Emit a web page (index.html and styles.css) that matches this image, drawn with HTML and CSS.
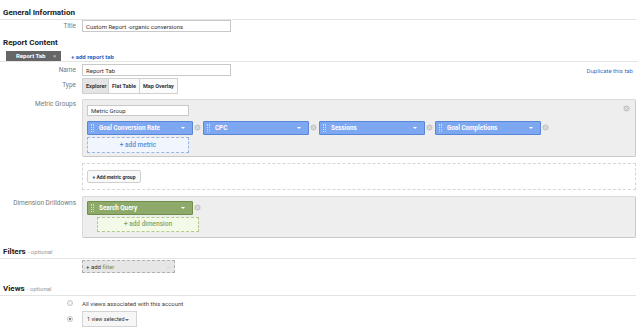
FILE: index.html
```html
<!DOCTYPE html>
<html>
<head>
    <title>Custom Report</title>
    <link rel="stylesheet" href="styles.css">
</head>
<body>
<div class="page">
    <h2 class="section-head first">General Information</h2>
    <div class="row row-title">
        <label>Title</label>
        <div class="field"><input class="text-input" type="text" value="Custom Report -organic conversions"></div>
    </div>

    <h2 class="section-head plain">Report Content</h2>
    <div class="tab-bar">
        <span class="tab">Report Tab <span class="tab-x">&times;</span></span>
        <a class="link add-tab" href="#">+ add report tab</a>
    </div>

    <div class="row row-name">
        <label>Name</label>
        <div class="field name-field">
            <input class="text-input" type="text" value="Report Tab">
            <a class="link duplicate" href="#">Duplicate this tab</a>
        </div>
    </div>

    <div class="row row-type">
        <label>Type</label>
        <div class="field">
            <div class="seg">
                <button class="seg-btn active">Explorer</button>
                <button class="seg-btn">Flat Table</button>
                <button class="seg-btn">Map Overlay</button>
            </div>
        </div>
    </div>

    <div class="row row-metrics">
        <label>Metric Groups</label>
        <div class="field">
            <div class="group-box metric-box">
                <span class="close-dot box-close"><svg viewBox="0 0 8 8"><circle cx="4" cy="4" r="3.5" fill="#c8c8c8"/><path d="M2.6 2.6L5.4 5.4M5.4 2.6L2.6 5.4" stroke="#f2f2f2" stroke-width="0.9"/></svg></span>
                <input class="text-input group-name" type="text" value="Metric Group">
                <div class="pills">
                    <div class="pill-wrap">
                        <div class="pill blue"><span class="grip"></span>Goal Conversion Rate<span class="caret"></span></div>
                        <span class="close-dot"><svg viewBox="0 0 8 8"><circle cx="4" cy="4" r="3.5" fill="#c8c8c8"/><path d="M2.6 2.6L5.4 5.4M5.4 2.6L2.6 5.4" stroke="#f2f2f2" stroke-width="0.9"/></svg></span>
                    </div>
                    <div class="pill-wrap">
                        <div class="pill blue"><span class="grip"></span>CPC<span class="caret"></span></div>
                        <span class="close-dot"><svg viewBox="0 0 8 8"><circle cx="4" cy="4" r="3.5" fill="#c8c8c8"/><path d="M2.6 2.6L5.4 5.4M5.4 2.6L2.6 5.4" stroke="#f2f2f2" stroke-width="0.9"/></svg></span>
                    </div>
                    <div class="pill-wrap">
                        <div class="pill blue"><span class="grip"></span>Sessions<span class="caret"></span></div>
                        <span class="close-dot"><svg viewBox="0 0 8 8"><circle cx="4" cy="4" r="3.5" fill="#c8c8c8"/><path d="M2.6 2.6L5.4 5.4M5.4 2.6L2.6 5.4" stroke="#f2f2f2" stroke-width="0.9"/></svg></span>
                    </div>
                    <div class="pill-wrap">
                        <div class="pill blue"><span class="grip"></span>Goal Completions<span class="caret"></span></div>
                        <span class="close-dot"><svg viewBox="0 0 8 8"><circle cx="4" cy="4" r="3.5" fill="#c8c8c8"/><path d="M2.6 2.6L5.4 5.4M5.4 2.6L2.6 5.4" stroke="#f2f2f2" stroke-width="0.9"/></svg></span>
                    </div>
                </div>
                <div class="add-box add-metric">+ add metric</div>
            </div>
            <div class="dashed-area">
                <button class="small-btn">+ Add metric group</button>
            </div>
        </div>
    </div>

    <div class="row row-dims">
        <label>Dimension Drilldowns</label>
        <div class="field">
            <div class="group-box dim-box">
                <div class="pill-wrap">
                    <div class="pill green"><span class="grip"></span>Search Query<span class="caret"></span></div>
                    <span class="close-dot"><svg viewBox="0 0 8 8"><circle cx="4" cy="4" r="3.5" fill="#c8c8c8"/><path d="M2.6 2.6L5.4 5.4M5.4 2.6L2.6 5.4" stroke="#f2f2f2" stroke-width="0.9"/></svg></span>
                </div>
                <div class="add-box add-dim">+ add dimension</div>
            </div>
        </div>
    </div>

    <h2 class="section-head filters-head">Filters <span class="optional">- optional</span></h2>
    <div class="row row-filter">
        <label></label>
        <div class="field">
            <div class="add-filter"><span>+ add</span> <span class="filter-word">filter</span><span class="dash">-</span></div>
        </div>
    </div>

    <h2 class="section-head views-head">Views <span class="optional">- optional</span></h2>
    <div class="radio-row r1">
        <span class="radio"></span>
        <span class="radio-text">All views associated with this account</span>
    </div>
    <div class="radio-row r2">
        <span class="radio checked"></span>
        <span class="view-select">1 view selected <span class="sel-caret"></span></span>
    </div>
</div>
</body>
</html>
```

FILE: styles.css
```css
* {
    margin: 0;
    padding: 0;
    box-sizing: border-box;
}
body {
    font-family: Roboto, Arial, sans-serif;
    background-color: #fff;
    color: #222;
    font-size: 6px;
}
.page {
    width: 638px;
    height: 332px;
    overflow: hidden;
}
.section-head {
    font-size: 8px;
    font-weight: bold;
    color: #222;
    padding-left: 3px;
    border-bottom: 1px solid #e4e4e4;
    width: 636px;
    line-height: 10px;
}
.section-head.first {
    margin-top: 8px;
    height: 12px;
}
.section-head.plain {
    border-bottom: none;
    margin-top: 6px;
    height: 12px;
}
.optional {
    font-weight: normal;
    font-size: 6px;
    color: #999;
}
.row {
    display: grid;
    grid-template-columns: 76px 1fr;
    column-gap: 6px;
}
.row label {
    text-align: right;
    color: #777;
    font-size: 6.5px;
    line-height: 12px;
}
.text-input {
    display: block;
    width: 149px;
    height: 12px;
    border: 1px solid #c9c9c9;
    font-family: Roboto, Arial, sans-serif;
    font-size: 6px;
    padding: 0 3px;
    color: #333;
    background: #fff;
}
.row-title {
    margin-top: 0;
}
.tab-bar {
    display: flex;
    align-items: center;
    height: 11px;
    border-bottom: 1px solid #e4e4e4;
    margin-top: 1px;
    padding-left: 6px;
}
.tab {
    background-color: #666;
    color: #fff;
    font-weight: bold;
    width: 55px;
    height: 10px;
    line-height: 10px;
    padding-left: 10px;
    font-size: 6px;
}
.tab-x {
    color: #ccc;
    font-weight: normal;
    margin-left: 6px;
}
.link {
    color: #2862c4;
    text-decoration: none;
    font-size: 6px;
}
.add-tab {
    margin-left: 10px;
    font-weight: bold;
}
.row-name {
    margin-top: 2px;
}
.name-field {
    display: flex;
    justify-content: space-between;
    align-items: center;
    width: 551px;
}
.duplicate {
    font-weight: normal;
    color: #3a6fc9;
}
.row-type {
    margin-top: 2px;
}
.row-type label {
    line-height: 14px;
}
.seg {
    display: flex;
}
.seg-btn {
    height: 16px;
    border: 1px solid #d0d0d0;
    background: #fbfbfb;
    font-family: Roboto, Arial, sans-serif;
    font-size: 5.5px;
    font-weight: bold;
    color: #333;
    padding: 0 3px;
    margin-left: -1px;
}
.seg-btn:first-child {
    margin-left: 0;
}
.seg-btn.active {
    background: #e4e4e4;
    width: 27px;
}
.row-metrics {
    margin-top: 5px;
}
.row-metrics label {
    line-height: 10px;
}
.group-box {
    position: relative;
    width: 554px;
    background: #eeeeee;
    border: 1px solid #dadada;
    border-right-color: #c8c8c8;
    border-bottom-color: #c8c8c8;
    border-radius: 2px;
}
.metric-box {
    height: 58px;
    padding: 5px 4px 0;
}
.box-close {
    position: absolute;
    top: 5px;
    right: 4px;
}
.group-name {
    width: 102px;
    height: 11px;
}
.pills {
    display: flex;
    margin-top: 5px;
}
.pill-wrap {
    display: flex;
    align-items: center;
    width: 116px;
}
.pill {
    position: relative;
    width: 106px;
    height: 14px;
    line-height: 12px;
    color: #fff;
    font-weight: bold;
    font-size: 6.3px;
    padding-left: 11px;
    border: 1px solid;
    border-radius: 1px;
}
.pill.blue {
    background: #7ea7f2;
    border-color: #5a86d8;
}
.pill.green {
    background: #8daa6b;
    border-color: #6f8e4c;
}
.grip {
    position: absolute;
    left: 3px;
    top: 2px;
    width: 3px;
    height: 8px;
    border-left: 1px dotted rgba(255,255,255,0.6);
    border-right: 1px dotted rgba(255,255,255,0.6);
}
.caret {
    position: absolute;
    right: 7px;
    top: 5px;
    border-left: 2px solid transparent;
    border-right: 2px solid transparent;
    border-top: 2px solid #fff;
}
.close-dot {
    display: inline-flex;
    width: 8px;
    height: 8px;
    margin-left: 1px;
}
.close-dot svg {
    width: 7px;
    height: 7px;
}
.add-box {
    width: 102px;
    height: 16px;
    line-height: 14px;
    text-align: center;
    font-size: 6.5px;
    font-weight: 500;
    border: 1px dashed;
    margin-top: 2px;
}
.add-metric {
    background: #f1f5fd;
    border-color: #9cb6e4;
    color: #5b8ad8;
}
.dashed-area {
    width: 554px;
    height: 27px;
    margin-top: 6px;
    border: 1px dashed #d6d6d6;
    padding: 6px 4px;
}
.small-btn {
    height: 13px;
    width: 54px;
    font-family: Roboto, Arial, sans-serif;
    font-size: 5px;
    font-weight: bold;
    color: #333;
    background: #f9f9f9;
    border: 1px solid #d0d0d0;
    border-radius: 2px;
}
.row-dims {
    margin-top: 6px;
}
.row-dims label {
    line-height: 14px;
}
.dim-box {
    height: 42px;
    padding: 4px 4px 0;
}
.add-dim {
    margin-left: 10px;
    height: 15px;
    line-height: 13px;
    background: #f3fae8;
    border-color: #b3c98f;
    color: #8aa45f;
}
.filters-head {
    margin-top: 9px;
    height: 12px;
}
.row-filter {
    margin-top: 1px;
}
.add-filter {
    position: relative;
    width: 93px;
    height: 13px;
    line-height: 11px;
    background: #e6e6e6;
    border: 1px dashed #b0b0b0;
    padding-left: 3px;
    font-size: 6px;
    color: #333;
}
.filter-word {
    color: #7d8f4a;
}
.dash {
    position: absolute;
    right: 5px;
    color: #999;
}
.views-head {
    margin-top: 11px;
    height: 12px;
}
.radio-row {
    display: flex;
    align-items: center;
    padding-left: 67px;
}
.r1 {
    margin-top: 1px;
    height: 12px;
}
.r2 {
    margin-top: 2px;
}
.radio {
    width: 6px;
    height: 6px;
    border-radius: 50%;
    border: 1px solid #c4c4c4;
    background: #f4f4f4;
    margin-right: 9px;
    position: relative;
}
.radio.checked::after {
    content: "";
    position: absolute;
    left: 1px;
    top: 1px;
    width: 2px;
    height: 2px;
    border-radius: 50%;
    background: #666;
}
.radio-text {
    color: #444;
    font-size: 6px;
}
.view-select {
    position: relative;
    width: 55px;
    height: 16px;
    line-height: 14px;
    border: 1px solid #d4d4d4;
    background: #f6f6f6;
    color: #333;
    font-size: 5.5px;
    padding-left: 4px;
}
.sel-caret {
    position: absolute;
    right: 7px;
    top: 7px;
    border-left: 2px solid transparent;
    border-right: 2px solid transparent;
    border-top: 2px solid #666;
}
```
